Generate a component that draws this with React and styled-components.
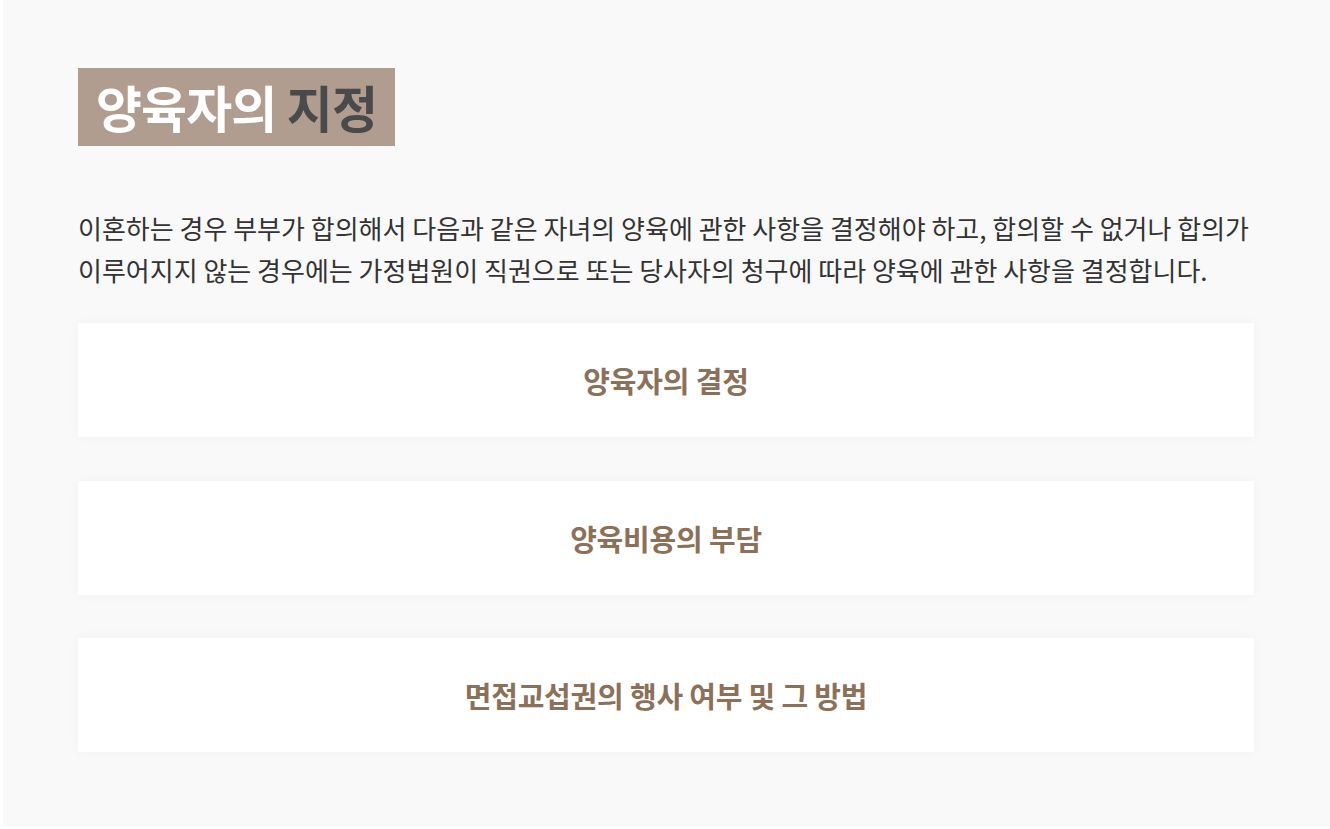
import React from 'react';
import styled, {createGlobalStyle} from 'styled-components';

const items = [
    '양육자의 결정',
    '양육비용의 부담',
    '면접교섭권의 행사 여부 및 그 방법',
];

const App = () => {
    return <>
        <GlobalStyle/>
        <Page>
            <Title>
                <Light>양육자의</Light> <Dark>지정</Dark>
            </Title>
            <Lead>
                이혼하는 경우 부부가 합의해서 다음과 같은 자녀의 양육에 관한 사항을 결정해야 하고, 합의할 수 없거나 합의가
                이루어지지 않는 경우에는 가정법원이 직권으로 또는 당사자의 청구에 따라 양육에 관한 사항을 결정합니다.
            </Lead>
            <CardList>
                {items.map(item => <Card key={item}>{item}</Card>)}
            </CardList>
        </Page>
    </>;
};

export default App;

const GlobalStyle = createGlobalStyle`
    body {
        margin: 0;
        background: #ffffff;
        font-family: "Noto Sans CJK KR", "Noto Sans", sans-serif;
    }
`;

const Page = styled.section`
    margin-left: 3px;
    height: 826px;
    box-sizing: border-box;
    padding: 68px 76px 0 75px;
    background: #f9f9f9;
`;

const Title = styled.h2`
    display: inline-block;
    margin: 0;
    height: 78px;
    padding: 0 18px;
    background: #b19d8f;
    font-size: 50px;
    font-weight: 700;
    line-height: 76px;
    letter-spacing: -0.9px;
`;

const Light = styled.span`
    color: #ffffff;
`;

const Dark = styled.span`
    color: #4a4a4a;
`;

const Lead = styled.p`
    margin: 61px 0 0;
    font-size: 26px;
    line-height: 42px;
    color: #333333;
    word-break: keep-all;
`;

const CardList = styled.div`
    display: flex;
    flex-direction: column;
    gap: 43.5px;
    margin-top: 32px;
`;

const Card = styled.div`
    display: flex;
    align-items: center;
    justify-content: center;
    height: 114px;
    background: #ffffff;
    box-shadow: 0 0 12px rgba(0, 0, 0, 0.035);
    font-size: 29px;
    font-weight: 700;
    color: #8b7159;
    letter-spacing: -0.2px;
`;
